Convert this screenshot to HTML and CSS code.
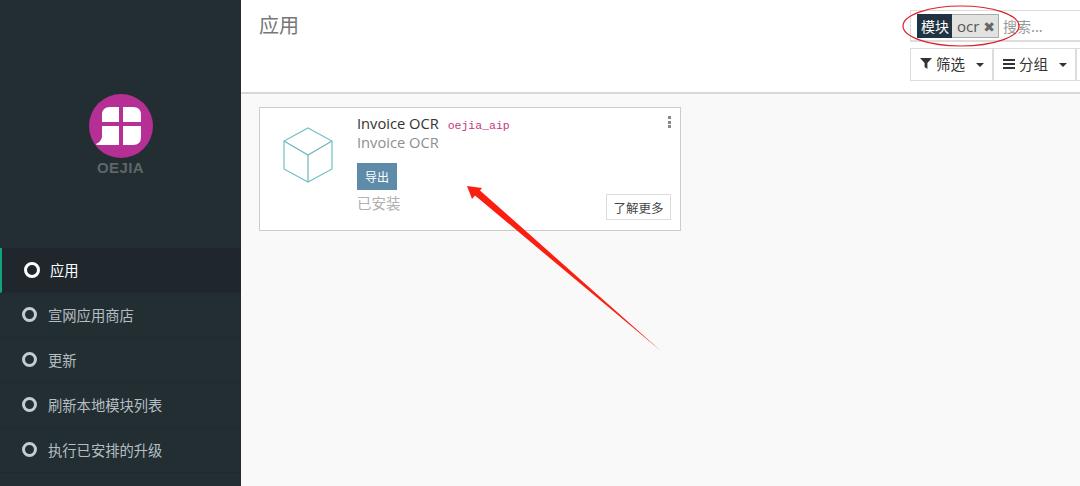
FILE: index.html
```html
<!DOCTYPE html>
<html lang="zh">
<head>
  <meta charset="UTF-8" />
  <title>应用</title>
  <link rel="stylesheet" href="styles.css">
</head>
<body>
  <aside class="sidebar">
    <div class="logo">
      <svg width="64" height="64" viewBox="0 0 64 64">
        <circle cx="32" cy="32" r="32" fill="#b52f94"/>
        <path d="M13 28V21q0-8 8-8H30V28Z M34 13H44q8 0 8 8V28H34Z M13 32H30V51H9q-2 0-2-1q5-2 6-7Z M34 32H52V43q0 8-8 8H34Z" fill="#fff"/>
      </svg>
      <div class="logo-name">OEJIA</div>
    </div>
    <ul class="menu">
      <li class="active"><i></i>应用</li>
      <li><i></i>宣网应用商店</li>
      <li><i></i>更新</li>
      <li><i></i>刷新本地模块列表</li>
      <li><i></i>执行已安排的升级</li>
    </ul>
  </aside>

  <main class="main">
    <header class="top">
      <h1>应用</h1>
      <div class="controls">
        <div class="search">
          <span class="facet"><b>模块</b><span class="facet-val">ocr <em>✖</em></span></span>
          <span class="placeholder">搜索...</span>
        </div>
        <div class="btns">
          <button><svg width="12" height="11" viewBox="0 0 12 11"><path d="M0 0H12L7.4 5V11L4.6 9V5Z" fill="#333"/></svg>筛选<u></u></button>
          <button><svg width="12" height="10" viewBox="0 0 12 10"><path d="M0 0H12V2H0ZM0 4H12V6H0ZM0 8H12V10H0Z" fill="#333"/></svg>分组<u></u></button>
          <button></button>
        </div>
      </div>
    </header>

    <section class="content">
      <div class="card">
        <svg class="cube" width="50" height="56" viewBox="0 0 50 56" fill="none" stroke-width="1.2">
          <path d="M25 1L49 14V42L25 55L1 42V14Z" stroke="#6fc0c4"/>
          <path d="M1 14L25 28L49 14M25 28V55" stroke="#6fb4ba"/>
        </svg>
        <div class="info">
          <div class="name">Invoice OCR <code>oejia_aip</code></div>
          <div class="summary">Invoice OCR</div>
          <button class="export">导出</button>
          <div class="installed">已安装</div>
        </div>
        <span class="dots"></span>
        <button class="more">了解更多</button>
      </div>
    </section>
  </main>

  <!-- hand drawn marks on top of the screenshot -->
  <svg class="marks" width="1080" height="486" viewBox="0 0 1080 486" fill="none">
    <ellipse cx="961" cy="26" rx="58" ry="20" stroke="#d9232e" stroke-width="1.2"/>
    <path d="M467 186L482 188L480 190.500L661 351L475 195.500L472 199Z" fill="#fb1f12"/>
  </svg>
</body>
</html>
```

FILE: styles.css
```css
* {
  box-sizing: border-box;
}

body {
  margin: 0;
  height: 486px;
  display: flex;
  overflow: hidden;
  font-family: "Noto Sans CJK SC", "Open Sans", sans-serif;
  font-size: 14px;
  color: #333;
  background: #f9f9f9;
}

.sidebar {
  width: 241px;
  flex-shrink: 0;
  background: #232e33;
}

.logo {
  height: 248px;
  padding-top: 94px;
  text-align: center;
}

.logo svg {
  display: block;
  margin: 0 auto;
}

.logo-name {
  font-family: "Liberation Sans", sans-serif;
  font-size: 15px;
  font-weight: bold;
  letter-spacing: 0.4px;
  line-height: 20px;
  color: #5f6568;
}

.menu {
  list-style: none;
  margin: 0;
  padding: 0;
}

.menu li {
  height: 45px;
  display: flex;
  align-items: center;
  padding: 0 0 1px 22px;
  gap: 11px;
  font-size: 14.3px;
  color: #b4bec2;
  border-bottom: 1px solid #20292e;
}

.menu i {
  width: 15px;
  height: 15px;
  border: 3px solid #c3ccd0;
  border-radius: 50%;
}

.menu .active {
  background: #1f272c;
  border-left: 2px solid #10a37f;
  padding: 0 0 1px 22px;
  color: #fff;
  gap: 10px;
}

.menu .active i {
  width: 16px;
  height: 16px;
  border-color: #fff;
}

.main {
  flex: 1;
  min-width: 0;
}

.top {
  height: 94px;
  background: #fff;
  border-bottom: 2px solid #d8d8d8;
  display: flex;
  justify-content: space-between;
  padding-left: 18px;
}

.top h1 {
  margin: 10px 0 0;
  font-size: 20px;
  font-weight: normal;
  line-height: 30px;
  color: #777;
}

.controls {
  width: 170px;
  padding-top: 10px;
  overflow: hidden;
}

.search {
  height: 32px;
  width: 190px;
  border: 1px solid #ddd;
  border-bottom-width: 2px;
  display: flex;
  align-items: center;
  padding-left: 6px;
}

.facet {
  display: flex;
  height: 24px;
  line-height: 24px;
  margin-right: 4px;
}

.facet b {
  font-weight: normal;
  color: #fff;
  background: #1f3342;
  padding: 0 3px 0 4px;
}

.facet-val {
  background: #e2e2e0;
  border: 1px solid #aaa;
  border-left: 0;
  padding: 0 3px 0 5px;
  line-height: 22px;
  font-family: "Open Sans", sans-serif;
  font-size: 15px;
  color: #555;
}

.facet-val em {
  font-style: normal;
  font-size: 14px;
  color: #666;
  font-family: "DejaVu Sans", sans-serif;
}

.placeholder {
  color: #999;
}

.btns {
  display: flex;
  margin-top: 6px;
}

.btns button {
  height: 33px;
  background: #fff;
  border: 1px solid #ddd;
  font: inherit;
  font-size: 14.5px;
  color: #333;
  padding: 0 0 2px 9px;
  display: flex;
  align-items: center;
  gap: 4px;
  width: 83px;
  flex-shrink: 0;
}

.btns u {
  border-top: 4px solid #333;
  border-left: 4px solid transparent;
  border-right: 4px solid transparent;
  margin: 2px 0 0 7px;
}

.content {
  padding: 13px 18px;
}

.card {
  position: relative;
  width: 422px;
  height: 124px;
  background: #fff;
  border: 1px solid #ccc;
  display: flex;
  padding: 6px 8px 0 23px;
}

.cube {
  margin: 13px 24px 0 0;
  flex-shrink: 0;
}

.info {
  flex: 1;
}

.name {
  font-family: "Open Sans", sans-serif;
  font-size: 14.7px;
  line-height: 19px;
  color: #333;
}

.name code {
  font-family: "Liberation Mono", monospace;
  font-size: 11.5px;
  color: #c7377e;
  margin-left: 5px;
}

.summary {
  font-family: "Open Sans", sans-serif;
  font-size: 14.7px;
  line-height: 19px;
  margin-top: -2px;
  color: #8f8f8f;
}

.export {
  display: block;
  width: 40px;
  height: 27px;
  margin-top: 11px;
  padding: 0;
  border: 0;
  background: #5e8ba8;
  color: #fff;
  font: inherit;
  font-size: 12px;
}

.installed {
  margin-top: 3px;
  line-height: 20px;
  font-size: 14.5px;
  color: #b0b0b0;
}

.dots {
  position: absolute;
  top: 8px;
  right: 9px;
  width: 3px;
  height: 12px;
  background: repeating-linear-gradient(#888 0 3px, transparent 3px 4.5px);
}

.more {
  position: absolute;
  right: 9px;
  bottom: 10px;
  width: 65px;
  height: 26px;
  padding: 0;
  background: #fff;
  border: 1px solid #ddd;
  font: inherit;
  font-size: 12.5px;
  color: #444;
}

.marks {
  position: absolute;
  left: 0;
  top: 0;
  pointer-events: none;
}
```
